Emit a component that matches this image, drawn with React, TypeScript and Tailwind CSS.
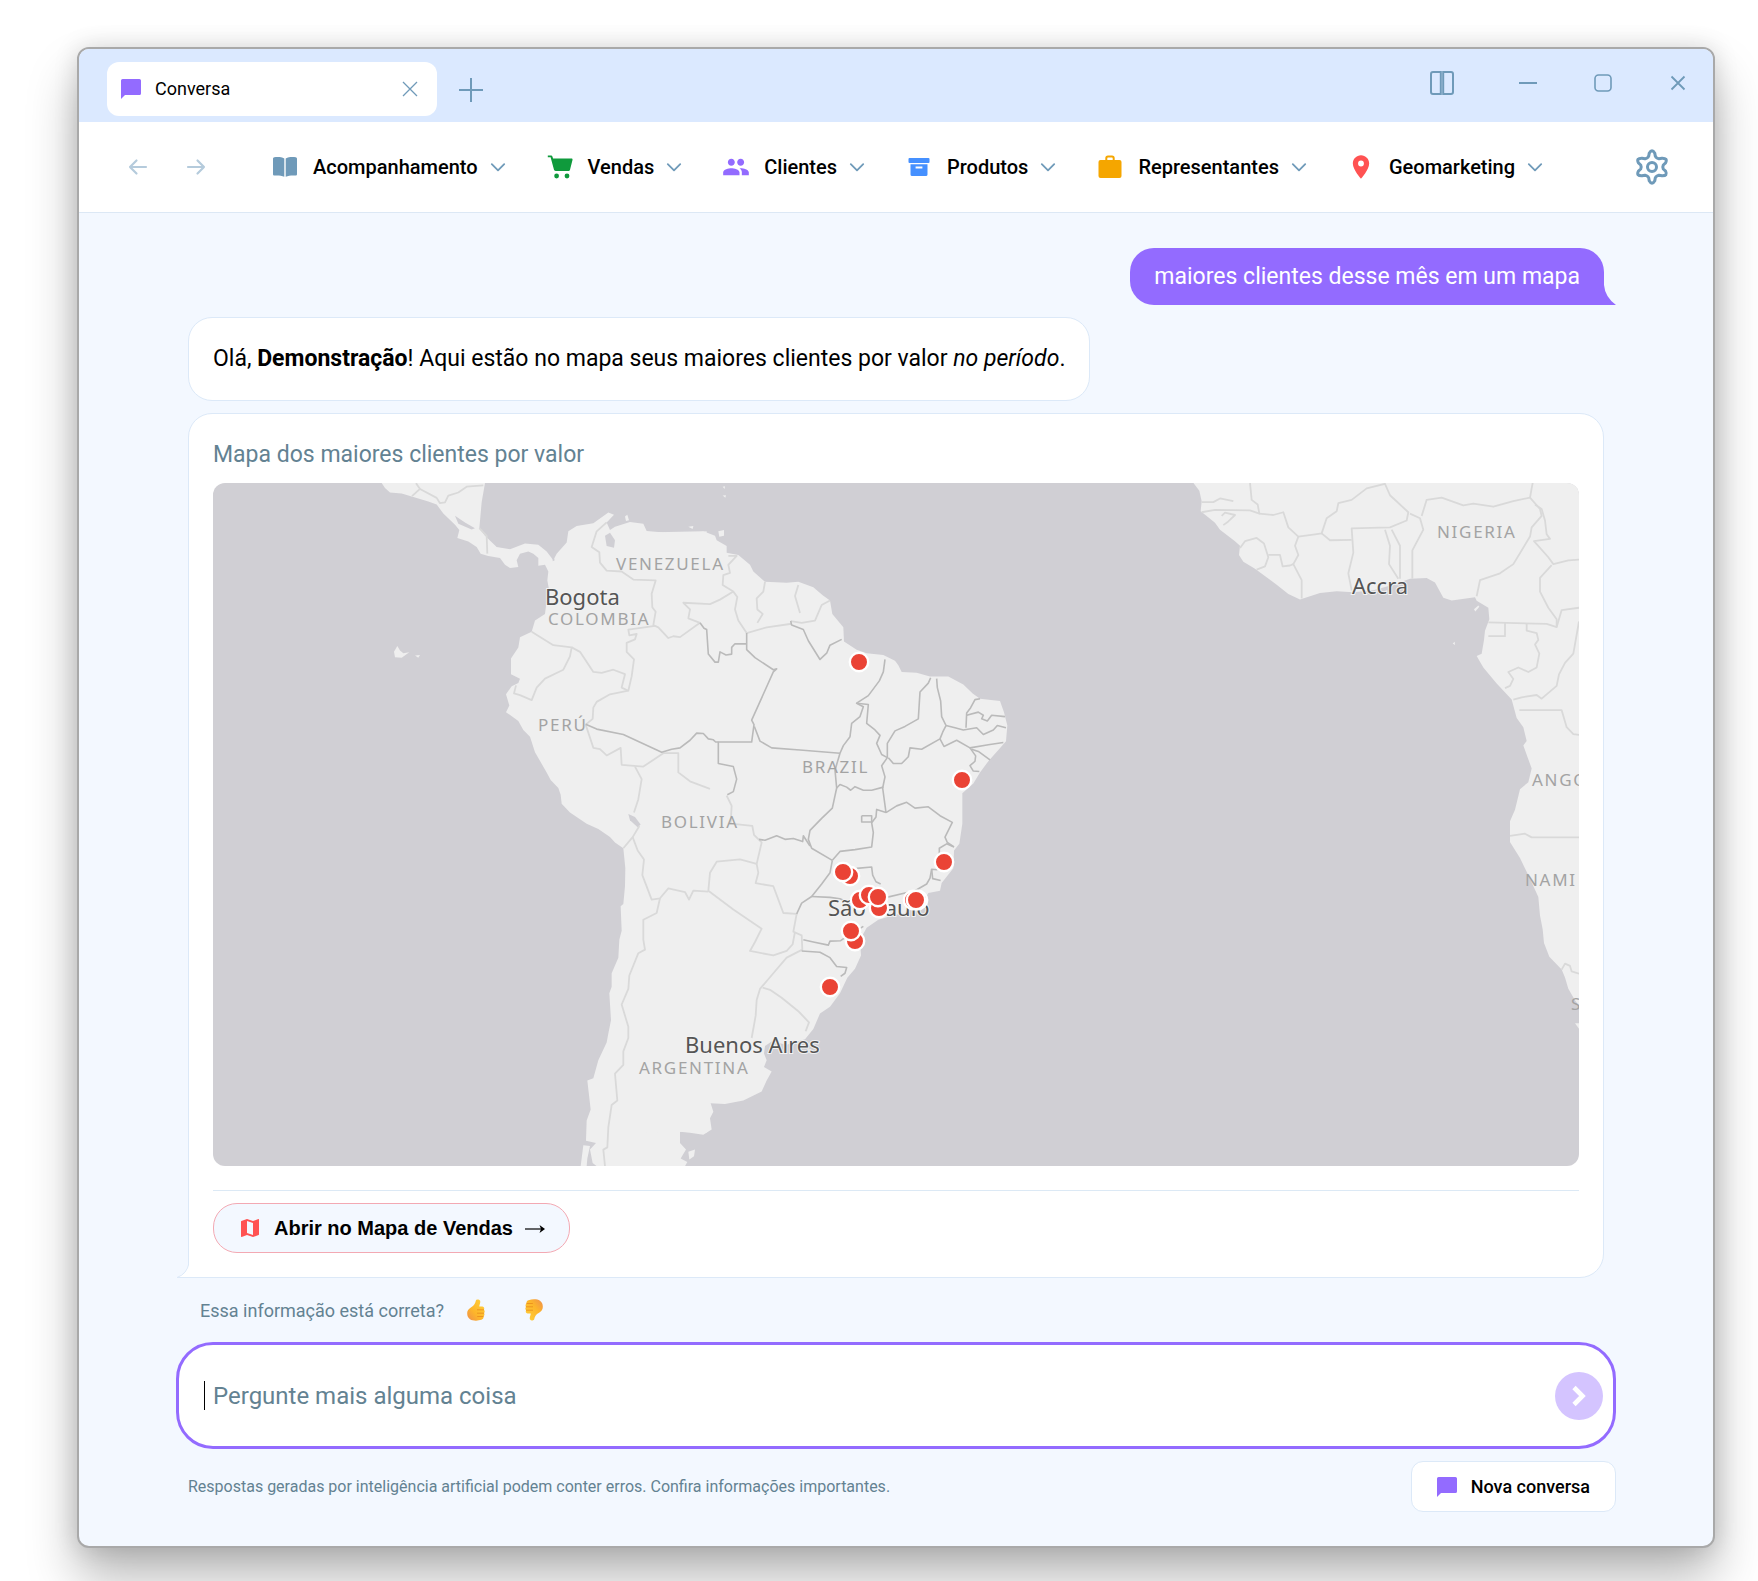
import { useState } from 'react';
import type { ReactNode } from 'react';
import { MdLocationOn, MdMap, MdPeople } from 'react-icons/md';

interface MenuItem {
  label: string;
  icon: ReactNode;
}

function ChatIcon({ className }: { className?: string }) {
  return (
    <svg viewBox="0 0 20 20" className={className} fill="#936bff" aria-hidden="true">
      <path d="M1.6 0H18.4A1.6 1.6 0 0 1 20 1.6V14.4A1.6 1.6 0 0 1 18.4 16H4L0 20V1.6A1.6 1.6 0 0 1 1.6 0Z" />
    </svg>
  );
}

function BookIcon() {
  return (
    <svg viewBox="0 0 24 24" className="h-6 w-6" fill="#6f9ab9" aria-hidden="true">
      <path d="M0 3.8C0 3 .5 2.4 1.3 2.3 5 1.9 8.600 2.100 11.300 3.500V21.800C8.500 20.500 5 20.200 1.500 20.500 .7 20.600 0 20 0 19.200Z" />
      <path d="M24 3.800C24 3 23.500 2.400 22.700 2.300 19 1.900 15.400 2.100 12.700 3.500V21.800C15.500 20.500 19 20.200 22.500 20.500 23.300 20.600 24 20 24 19.200Z" />
    </svg>
  );
}

function CartIcon() {
  return (
    <svg viewBox="0 0 26 24" className="h-6 w-[26px]" fill="#0f9a3c" aria-hidden="true">
      <path d="M.8.6H4.200C4.800.6 5.200 1 5.400 1.500L6.100 3.600H24.600C25.300 3.600 25.700 4.200 25.500 4.900L23 14.700C22.800 15.500 22.200 16 21.400 16H8.600C7.800 16 7.200 15.500 7 14.800L3.600 2.300H.8Z" />
      <circle cx="9.600" cy="21" r="2.400" />
      <circle cx="20" cy="21" r="2.400" />
    </svg>
  );
}

function BoxIcon() {
  return (
    <svg viewBox="0 0 24 24" className="h-6 w-6" fill="#4590ff" aria-hidden="true">
      <rect x="1.500" y="3" width="21" height="5" rx="1" />
      <path fillRule="evenodd" d="M3.500 9.200H20.500V19.400A1.600 1.600 0 0 1 18.900 21H5.100A1.600 1.600 0 0 1 3.500 19.400ZM8.600 11.600V13.400H15.400V11.600Z" />
    </svg>
  );
}

function BriefcaseIcon() {
  return (
    <svg viewBox="0 0 24 24" className="h-6 w-6" aria-hidden="true">
      <rect x="0.500" y="5" width="23" height="18" rx="2" fill="#f5a600" />
      <path d="M8.300 6V3.200Q8.300 1.500 10 1.500H14Q15.700 1.500 15.700 3.200V6" fill="none" stroke="#f5a600" strokeWidth="2" />
    </svg>
  );
}

function GearIcon() {
  return (
    <svg viewBox="0 0 36 36" className="h-9 w-9" fill="none" stroke="#6f9ab9" strokeWidth="3" strokeLinejoin="round" aria-hidden="true">
      <path d="M15.200 4.200Q18-.8 20.800 4.200L21.300 7.200Q21.700 8.600 23.200 9.200L25 9.800 28 9.200Q34 9 31.600 13.900L29.300 16Q28.300 18 29.300 20L31.600 22.100Q34 27 28 26.800L25 26.200 23.200 26.800Q21.700 27.400 21.300 28.800L20.800 31.800Q18 36.800 15.200 31.800L14.700 28.800Q14.300 27.400 12.800 26.800L11 26.200 8 26.800Q2 27 4.400 22.100L6.700 20Q7.700 18 6.700 16L4.400 13.900Q2 9 8 9.200L11 9.800 12.800 9.200Q14.300 8.600 14.700 7.200Z" />
      <circle cx="18" cy="18" r="4.500" />
    </svg>
  );
}

function ThumbIcon({ down = false }: { down?: boolean }) {
  const id = down ? 'thumb-down' : 'thumb-up';
  return (
    <svg viewBox="0 0 18 22" className={down ? 'h-[22px] w-[18px] -scale-y-100' : 'h-[22px] w-[18px]'} aria-hidden="true">
      <defs>
        <linearGradient id={id} x1="1" y1="0" x2="0" y2="1">
          <stop offset="0" stopColor="#ffd23b" />
          <stop offset="0.600" stopColor="#fdb52a" />
          <stop offset="1" stopColor="#ef8f4d" />
        </linearGradient>
      </defs>
      <g transform={down ? 'matrix(-1 0 0 1 18 0)' : undefined}>
        <path
          d="M10.500.5C12.500.1 13.600 1.600 13.200 3.400 12.900 5 12.300 6.300 12.300 7.600H15.300C17.200 7.800 17.700 9.600 16.800 10.700 18 11.600 17.900 13.400 16.900 14.100 17.900 15.300 17.500 16.800 16.400 17.400 17 19 16 20.400 14.400 20.800 10.800 22 5.600 22 3 20.200.5 18.500-.2 15.400.4 12.600 1 10 3.200 9 5.600 7.200 7.800 5.400 8.300 3.600 8.800 1.700 9 1 9.700.6 10.500.5Z"
          fill={`url(#${id})`}
        />
        <path d="M10.400 10.800H16.600M10.400 14.200H16.700M10.600 17.500H16.200" stroke="#e98a1c" strokeWidth="0.800" strokeLinecap="round" />
      </g>
    </svg>
  );
}

function Chevron() {
  return (
    <svg viewBox="0 0 20 20" className="h-5 w-5" fill="none" stroke="#6f9ab9" strokeWidth="1.800" strokeLinecap="round" strokeLinejoin="round" aria-hidden="true">
      <path d="M3.800 7.200 10 13.400 16.200 7.200" />
    </svg>
  );
}

const MENU: MenuItem[] = [
  { label: 'Acompanhamento', icon: <BookIcon /> },
  { label: 'Vendas', icon: <CartIcon /> },
  { label: 'Clientes', icon: <MdPeople className="h-7 w-7 text-[#936bff]" /> },
  { label: 'Produtos', icon: <BoxIcon /> },
  { label: 'Representantes', icon: <BriefcaseIcon /> },
  { label: 'Geomarketing', icon: <MdLocationOn className="h-7 w-7 text-[#ff5252]" /> },
];

// Each region is digitised on its own grid and projected onto the map by `matrix`.
const REGIONS = [
  {
    matrix: 'translate(-3 -3) scale(0.33333 0.4464)',
    land: [
      '515,7 525,18 540,28 575,30 610,38 655,48 680,55 700,75 735,100 748,112 742,130 775,138 800,150 812,165 835,170 870,175 885,190 900,197 925,195 920,180 930,165 955,160 970,165 985,175 985,192 1005,190 1015,205 1012,225 1017,245 1010,270 1005,300 975,315 965,340 930,352 925,375 903,400 903,435 930,445 925,455 905,462 888,480 898,505 888,520 925,540 940,560 960,575 975,610 1010,655 1022,672 1045,690 1052,705 1055,725 1080,745 1130,770 1165,782 1200,800 1215,812 1240,825 1246,870 1245,910 1240,950 1232,955 1235,1010 1228,1030 1225,1070 1205,1105 1205,1135 1198,1150 1203,1210 1195,1240 1190,1260 1165,1300 1150,1340 1132,1345 1142,1410 1130,1435 1128,1480 1158,1485 1140,1500 1148,1530 1160,1537 1425,1537 1432,1528 1412,1520 1428,1500 1410,1485 1410,1460 1490,1462 1490,115 1450,118 1410,128 1370,118 1310,114 1300,98 1260,94 1215,105 1200,112 1190,95 1212,78 1195,73 1150,97 1100,103 1075,115 1070,140 1040,165 1030,180 1010,160 985,145 945,142 900,155 860,150 825,125 808,108 815,50 825,7',
      '1120,1490 1140,1492 1132,1520 1130,1537 1112,1537',
      '552,385 562,372 570,382 580,388 598,386 575,398 555,397',
      '615,393 630,392 625,398',
      '1245,82 1252,78 1257,90 1248,92',
      '1435,105 1450,103 1448,110',
      '1435,1505 1455,1500 1452,1515 1438,1522',
    ],
    water: [
      '1185,125 1200,118 1215,135 1212,152 1190,148',
      '735,80 765,95 795,108 785,111 745,98',
      '1255,748 1275,755 1292,772 1283,778 1260,762',
      '1028,165 1034,180 1028,182',
    ],
    borders: [
      '606,36 630,20 618,7',
      '630,20 680,40 690,52 705,50 715,35 745,28 770,15 820,12',
      '808,108 830,125 832,165',
      '1190,95 1160,115 1145,150 1168,162 1170,185 1190,203 1235,205 1270,223 1337,225 1325,255 1327,285 1337,295 1330,325 1345,330 1375,354 1390,350 1410,352 1470,320',
      '1335,327 1255,335 1258,348 1280,345 1275,357 1250,365 1250,385 1272,402 1265,440 1255,472 1200,480 1160,497 1150,510 1148,535 1127,548',
      '965,340 1030,370 1085,375 1080,395 1060,425 1005,445 980,465 965,493 930,482 912,478 918,460',
      '1085,375 1110,385 1150,430 1175,432 1210,425 1245,435 1235,465 1255,472',
      '1127,548 1150,600 1170,603 1190,617 1232,600 1235,638 1300,642 1360,612 1405,612 1405,655 1440,675 1500,692',
      '1275,642 1295,670 1285,715 1272,745',
      '1288,775 1268,800 1240,825',
      '1268,800 1283,830 1302,850 1297,885 1325,940 1350,937 1375,915 1425,923 1437,940 1450,920 1495,922',
      '1350,937 1340,970 1300,985 1300,1030 1305,1052 1285,1060 1258,1110 1255,1140 1235,1175 1255,1225 1255,1250 1240,1280 1240,1310 1215,1330 1222,1390 1205,1400 1195,1450 1192,1495 1180,1500 1185,1537',
    ],
    states: [],
  },
  {
    matrix: 'translate(387 -3) scale(0.33333 0.4464)',
    land: [
      '310,115 345,125 350,135 380,148 380,163 415,168 450,190 460,205 495,228 560,230 595,228 640,240 668,258 690,270 697,300 730,330 732,362 770,380 800,388 850,392 885,405 895,415 905,430 950,432 990,440 1045,440 1090,458 1118,478 1140,490 1200,495 1212,520 1222,550 1218,585 1195,605 1165,630 1140,655 1120,680 1087,702 1087,770 1078,815 1062,830 1060,870 1025,903 1020,920 985,925 970,945 930,950 915,970 880,975 835,985 800,1003 780,1030 783,1065 765,1095 742,1115 720,1150 690,1180 660,1195 640,1230 615,1253 560,1265 515,1258 495,1268 492,1285 500,1300 492,1315 515,1325 500,1345 485,1370 430,1390 375,1398 332,1396 340,1415 330,1430 335,1455 310,1467 270,1462 240,1460 100,1462 100,118',
      '355,115 372,112 372,125 358,127',
      '368,15 375,14 374,20',
      '368,35 378,34 376,40',
    ],
    water: [],
    borders: [
      '385,170 410,170 385,190 390,208 370,213 368,235 400,250 412,262 405,290 415,315 440,343',
      '400,250 360,268 330,278 250,275 270,290 265,310 300,320',
      '440,343 500,330 575,322',
      '495,228 490,250 470,265 472,290 488,300 472,320',
      '595,235 585,260 600,298',
      '690,270 665,280 645,315 605,320 572,316',
      '380,707 395,730 392,770 457,775 462,795 485,812 470,860',
      '470,860 420,850 350,855 330,880 325,920 400,962 485,1005 465,1035 450,1055 520,1065 560,1055 578,1040 585,1012',
      '470,860 475,880 467,903 520,910 530,930 550,970 590,972 580,1012 605,1020 607,1052 560,1070 520,1105 480,1140 470,1165 467,1200 455,1250',
      '488,1137 510,1142 545,1160 595,1190 627,1215 617,1235',
    ],
    states: [
      '300,320 312,332 320,335 325,390 345,408 355,408 360,385 378,392 395,390 395,375 405,367 438,367',
      '440,343 440,380 465,398 520,425 530,423 520,430 455,538 462,548 455,587 355,587 355,635 400,642 410,670 400,698 382,705',
      '-43,547 -10,558 70,570 185,610 215,603 240,600 270,583 290,567 310,568 325,580 340,582 347,587 355,587',
      '463,552 480,585 515,600 600,605 720,612',
      '572,316 575,325 610,335 625,360 660,402 680,388 690,370 725,357',
      '855,402 850,430 838,450 805,483 770,500 790,508 780,530 755,545 750,575 730,595 720,612 705,650 710,690 697,735 665,758 630,785 625,805 635,825 697,852',
      '770,500 805,503 800,545 825,560 840,572 830,590 845,615 862,622 845,640 855,665 848,690 858,745',
      '862,622 862,590 885,562 915,552 955,535 960,475 985,455 992,443',
      '1010,445 1012,465 1022,495 1025,530 1038,550 1028,565 1020,580 965,603 930,600 925,620 905,635 880,635 865,622',
      '1038,550 1065,555 1090,560 1130,555 1150,570 1180,560 1192,550 1218,555',
      '1140,490 1125,492 1112,510 1100,522 1098,555',
      '1100,527 1135,520 1150,527 1145,535 1162,540 1175,527 1215,530',
      '1020,580 1032,597 1070,583 1110,600 1165,593 1210,588',
      '1115,603 1135,608 1170,627',
      '1110,600 1127,618 1125,630 1110,640 1120,652 1138,653',
      '710,690 720,682 740,688 752,695 765,687 790,695 815,695 850,688',
      '858,745 890,730 920,722 945,735 985,732 1020,752 1057,767 1035,800 1042,812 1062,822',
      '858,745 830,738 828,755 815,768 820,790 815,822 765,828 720,832 697,852',
      '785,752 815,752 815,766 785,766 785,752',
      '477,805 495,807 530,797 555,805 580,803 608,810 610,797 630,820',
      '697,852 690,880 665,905 635,933 605,948 590,972',
      '770,870 815,867 818,885 828,900 842,905',
      '860,935 915,925 945,920 980,905 990,892 995,872 1012,873',
      '1062,822 1040,815 1018,825 1018,845',
      '995,872 998,893 1022,897',
      '635,933 690,935 720,938 755,950',
      '610,1030 640,1035 685,1042 690,1033 722,1032 745,1020 790,1000',
      '605,1055 660,1058 690,1070 710,1090 740,1092 735,1105 722,1112',
    ],
  },
  {
    matrix: 'translate(947 -13) scale(0.33333 0.45918)',
    land: [
      '100,28 118,45 125,68 122,90 140,100 165,115 180,130 225,155 240,165 237,185 250,200 285,215 350,250 385,270 420,282 480,268 530,264 580,266 640,262 700,250 750,237 800,235 825,245 850,278 875,284 945,277 950,285 985,300 988,325 975,350 972,370 965,400 950,405 970,430 1010,465 1055,500 1070,540 1090,560 1100,590 1090,600 1100,620 1115,650 1105,680 1080,695 1065,740 1050,765 1050,810 1080,845 1110,890 1135,930 1140,970 1148,1000 1152,1030 1168,1060 1205,1088 1215,1105 1225,1130 1245,1155 1260,1170 1260,28',
      '1245,1205 1260,1205 1260,1220',
      '942,303 955,295 958,298 946,308',
      '878,378 884,374 885,381',
    ],
    water: [],
    borders: [
      '125,70 160,70 180,62 220,68',
      '125,92 165,87 270,88 298,95 293,75 275,65 270,28',
      '185,100 195,93 225,98 205,112 190,120',
      '298,95 340,98 370,92 385,125 415,145 405,165 415,185 400,205 425,240 425,280',
      '240,170 255,155 290,148 312,160 325,190 315,210 290,217',
      '325,185 360,185 368,210 390,208 400,205',
      '415,145 465,140 485,138 500,105 530,90 535,72 575,65 620,40 675,30 690,55 745,92 740,110 690,125 575,127 580,180 565,225 575,262',
      '485,138 510,153 575,152',
      '675,130 690,165 687,205 715,237',
      '695,130 720,165 720,237',
      '757,237 757,175 790,130 780,105 750,95',
      '785,100 800,65 845,60 910,77 940,73 1000,80 1060,68 1110,60 1140,85 1145,100 1115,125 1110,145 1060,205 1020,225 960,240 950,275',
      '1110,60 1118,28',
      '1125,75 1145,85 1155,110 1160,140 1170,150 1122,155 1165,190 1180,205 1225,197 1257,195',
      '1175,207 1140,235 1140,265 1165,300 1190,325 1190,342 1160,335 985,332',
      '985,362 1035,362 1035,332',
      '1100,335 1100,350 1130,355 1135,370 1125,380 1138,400 1130,430 1105,440 1075,430 1045,440 1060,455 1050,470 1035,475',
      '1190,342 1205,305 1257,300',
      '1257,330 1240,400 1215,420 1197,445 1190,470 1145,498 1130,490 1085,495 1060,500',
      '1078,523 1205,523 1220,560 1240,575 1257,577',
      '1050,797 1095,792 1115,800 1257,800',
      '1205,1088 1215,1075 1230,1080 1235,1092 1257,1097',
    ],
    states: [],
  },
];

const COUNTRIES = [
  { name: 'VENEZUELA', x: 403, y: 87 },
  { name: 'COLOMBIA', x: 335, y: 142 },
  { name: 'PERÚ', x: 325, y: 248 },
  { name: 'BRAZIL', x: 589, y: 290 },
  { name: 'BOLIVIA', x: 448, y: 345 },
  { name: 'ARGENTINA', x: 426, y: 591 },
  { name: 'NIGERIA', x: 1224, y: 55 },
  { name: 'ANGO', x: 1319, y: 303 },
  { name: 'NAMI', x: 1312, y: 403 },
  { name: 'S', x: 1358, y: 527 },
];

const CITIES = [
  { name: 'Bogota', x: 332, y: 122 },
  { name: 'São Paulo', x: 615, y: 433 },
  { name: 'Buenos Aires', x: 472, y: 570 },
  { name: 'Accra', x: 1139, y: 111 },
];

const CLIENTS = [
  [646, 179],
  [749, 297],
  [731, 379],
  [637, 393],
  [630, 389],
  [647, 417],
  [656, 412],
  [666, 425],
  [665, 414],
  [700, 417],
  [705, 417],
  [703, 417],
  [642, 458],
  [638, 448],
  [617, 504],
];

function ClientMap() {
  return (
    <svg viewBox="0 0 1366 683" className="block h-auto w-full rounded-xl bg-[#d0cfd4]" role="img" aria-label="Mapa dos maiores clientes por valor">
      {REGIONS.map(({ matrix, land }) => (
        <g key={matrix} transform={matrix} fill="#efefef">
          {land.map((points) => (
            <polygon key={points} points={points} />
          ))}
        </g>
      ))}
      {REGIONS.map(({ matrix, water, borders, states }) => (
        <g key={matrix} transform={matrix} fill="none" strokeLinejoin="round">
          {water.map((points) => (
            <polygon key={points} points={points} fill="#d0cfd4" />
          ))}
          {borders.map((points) => (
            <polyline key={points} points={points} stroke="#d9d9d9" strokeWidth="1.800" vectorEffect="non-scaling-stroke" />
          ))}
          {states.map((points) => (
            <polyline key={points} points={points} stroke="#bababa" strokeWidth="1.600" vectorEffect="non-scaling-stroke" />
          ))}
        </g>
      ))}
      <g className="font-['Noto_Sans',sans-serif] text-[17px] tracking-widest" fill="#a3a3a3">
        {COUNTRIES.map(({ name, x, y }) => (
          <text key={name} x={x} y={y}>{name}</text>
        ))}
      </g>
      <g className="font-['Noto_Sans',sans-serif] text-[22px]" fill="#555" stroke="#f3f3f3" strokeWidth="2" paintOrder="stroke">
        {CITIES.map(({ name, x, y }) => (
          <text key={name} x={x} y={y}>{name}</text>
        ))}
      </g>
      {CLIENTS.map(([x, y]) => (
        <circle key={`${x}-${y}`} cx={x} cy={y} r="9.200" fill="#ea4335" stroke="#fff" strokeWidth="2.400" />
      ))}
    </svg>
  );
}

function TitleBar() {
  return (
    <header className="flex h-[73px] items-start justify-between bg-[#dbe9ff] pl-7 pr-[26px] pt-[13px] text-[#6f9ab9]">
      <div className="flex items-center gap-[22px]">
        <div className="flex h-[54px] w-[330px] items-center rounded-xl bg-white pl-3.5 pr-[19px]">
          <ChatIcon className="h-5 w-5" />
          <span className="ml-3.5 text-[18px] leading-6 text-black">Conversa</span>
          <button aria-label="Fechar aba" className="ml-auto">
            <svg viewBox="0 0 16 16" className="h-4 w-4" stroke="currentColor" strokeWidth="1.300">
              <path d="M1 1 15 15M15 1 1 15" />
            </svg>
          </button>
        </div>
        <button aria-label="Nova aba">
          <svg viewBox="0 0 24 24" className="mt-0.5 h-6 w-6" stroke="currentColor" strokeWidth="2">
            <path d="M12 0V24M0 12H24" />
          </svg>
        </button>
      </div>
      <div className="flex h-[42px] items-center">
        <button aria-label="Dividir janela" className="mr-[65px]">
          <svg viewBox="0 0 24 24" className="h-6 w-6" fill="none" stroke="currentColor" strokeWidth="2">
            <path d="M3 1H10.800V23H3Q1 23 1 21V3Q1 1 3 1ZM13.200 1H21Q23 1 23 3V21Q23 23 21 23H13.200Z" />
          </svg>
        </button>
        <button aria-label="Minimizar" className="mr-[57px]">
          <svg viewBox="0 0 18 18" className="h-[18px] w-[18px]" stroke="currentColor" strokeWidth="2">
            <path d="M0 9H18" />
          </svg>
        </button>
        <button aria-label="Maximizar" className="mr-[57px]">
          <svg viewBox="0 0 18 18" className="h-[18px] w-[18px]" fill="none" stroke="currentColor" strokeWidth="1.600">
            <rect x="1" y="1" width="16" height="16" rx="3.500" />
          </svg>
        </button>
        <button aria-label="Fechar">
          <svg viewBox="0 0 18 18" className="h-[18px] w-[18px]" stroke="currentColor" strokeWidth="1.800">
            <path d="M2.500 2.500 15.500 15.500M15.500 2.500 2.500 15.500" />
          </svg>
        </button>
      </div>
    </header>
  );
}

function NavBar() {
  return (
    <nav className="flex h-[91px] items-center border-b border-[#dce8f5] bg-white pl-[49px] pr-[43px]">
      <div className="flex gap-[38px] text-[#b5cbdc]">
        <button aria-label="Voltar">
          <svg viewBox="0 0 20 20" className="h-5 w-5" fill="none" stroke="currentColor" strokeWidth="2.200" strokeLinecap="round" strokeLinejoin="round">
            <path d="M18 10H2M8.500 3.500 2 10 8.500 16.500" />
          </svg>
        </button>
        <button aria-label="Avançar">
          <svg viewBox="0 0 20 20" className="h-5 w-5" fill="none" stroke="currentColor" strokeWidth="2.200" strokeLinecap="round" strokeLinejoin="round">
            <path d="M2 10H18M11.500 3.500 18 10 11.500 16.500" />
          </svg>
        </button>
      </div>
      <div className="ml-[67px] flex gap-10">
        {MENU.map(({ label, icon }) => (
          <button key={label} className="flex items-center text-[20px] font-medium text-black">
            <span className="flex h-6 w-6 items-center justify-center *:shrink-0">{icon}</span>
            <span className="ml-4 mr-2.5">{label}</span>
            <Chevron />
          </button>
        ))}
      </div>
      <button aria-label="Configurações" className="ml-auto">
        <GearIcon />
      </button>
    </nav>
  );
}

export default function App() {
  const [question, setQuestion] = useState('');

  return (
    <div className="min-h-screen overflow-hidden bg-white pb-[33px] pl-[77px] pr-[43px] pt-[47px] font-[Roboto,sans-serif] text-black">
      <div className="overflow-hidden rounded-xl border-2 border-[#a9a9a9] bg-[#f3f8ff] shadow-[0_0_24px_rgba(0,0,0,0.14),0_30px_50px_rgba(0,0,0,0.28)]">
        <TitleBar />
        <NavBar />

        <main className="px-[97px] pb-[34px] pt-[35px]">
          {/* Conversation */}
          <div className="flex flex-col gap-3 px-3">
            <div className="relative self-end rounded-t-3xl rounded-bl-3xl bg-[#936bff] px-6 py-3 text-[23px] leading-[33px] text-white">
              maiores clientes desse mês em um mapa
              <svg viewBox="0 0 12 20" className="absolute bottom-0 left-full h-5 w-3" fill="#936bff" aria-hidden="true">
                <path d="M0 0Q1 12 12 20H0Z" />
              </svg>
            </div>

            <div className="self-start rounded-3xl border border-[#dce9f8] bg-white px-6 py-6 text-[23px] leading-[34px]">
              Olá, <strong className="font-bold">Demonstração</strong>! Aqui estão no mapa seus maiores clientes por valor <em>no período</em>.
            </div>

            <div className="relative rounded-t-3xl rounded-br-3xl border border-[#dce9f8] bg-white px-6 pb-6 pt-6">
              <h2 className="mb-3 text-[23px] leading-[33px] text-[#638292]">Mapa dos maiores clientes por valor</h2>
              <ClientMap />
              <div className="mt-6 border-t border-[#dce9f5] pt-3">
                <button className="flex h-[50px] items-center rounded-3xl border border-[#f3a9b3] bg-[#f3f8ff] px-6 font-['Liberation_Sans',sans-serif] text-[20px] font-bold">
                  <MdMap className="h-6 w-6 text-[#ff5252]" />
                  <span className="ml-3 mr-3">Abrir no Mapa de Vendas</span>
                  <svg viewBox="0 0 20 12" className="h-3 w-5" aria-hidden="true">
                    <path d="M0 7H18" stroke="#000" strokeWidth="1.200" />
                    <path d="M14.500 3 20 7 14.500 11 16 7Z" />
                  </svg>
                </button>
              </div>
              <svg viewBox="0 0 13 15" className="absolute -bottom-px right-full h-[15px] w-[13px]" aria-hidden="true">
                <path d="M13 0Q11 11 0 14.500H14V0Z" fill="#fff" />
                <path d="M13 0Q11 11 1 14.500H13" fill="none" stroke="#dce9f8" />
              </svg>
            </div>
          </div>

          {/* Feedback */}
          <div className="flex h-16 items-center px-6 text-[18px] text-[#638292]">
            <span>Essa informação está correta?</span>
            <button aria-label="Sim" className="ml-[23px]">
              <ThumbIcon />
            </button>
            <button aria-label="Não" className="ml-10">
              <ThumbIcon down />
            </button>
          </div>

          {/* Prompt */}
          <form className="flex h-[107px] items-center rounded-[37px] border-3 border-[#936bff] bg-white pl-[25px] pr-2.5" onSubmit={(e) => e.preventDefault()}>
            <span className="h-[29px] w-px bg-black" aria-hidden="true" />
            <input
              aria-label="Pergunta"
              value={question}
              onChange={(e) => setQuestion(e.target.value)}
              placeholder="Pergunte mais alguma coisa"
              className="ml-2 min-w-0 flex-1 bg-transparent text-[24px] outline-none placeholder:text-[#638292]"
            />
            <button aria-label="Enviar" className="flex h-12 w-12 items-center justify-center rounded-full bg-[#d4c4ff]">
              <svg viewBox="0 0 20 24" className="h-6 w-5" fill="none" stroke="#fff" strokeWidth="4.600" aria-hidden="true">
                <path d="M5 3.500 13.500 12 5 20.500" />
              </svg>
            </button>
          </form>

          <footer className="mt-3 flex items-center justify-between pl-3">
            <p className="text-[16px] text-[#638292]">
              Respostas geradas por inteligência artificial podem conter erros. Confira informações importantes.
            </p>
            <button className="flex h-[51px] items-center rounded-xl border border-[#dce9f8] bg-white px-[25px] text-[18px] font-medium">
              <ChatIcon className="mr-3.5 h-5 w-5" />
              Nova conversa
            </button>
          </footer>
        </main>
      </div>
    </div>
  );
}
